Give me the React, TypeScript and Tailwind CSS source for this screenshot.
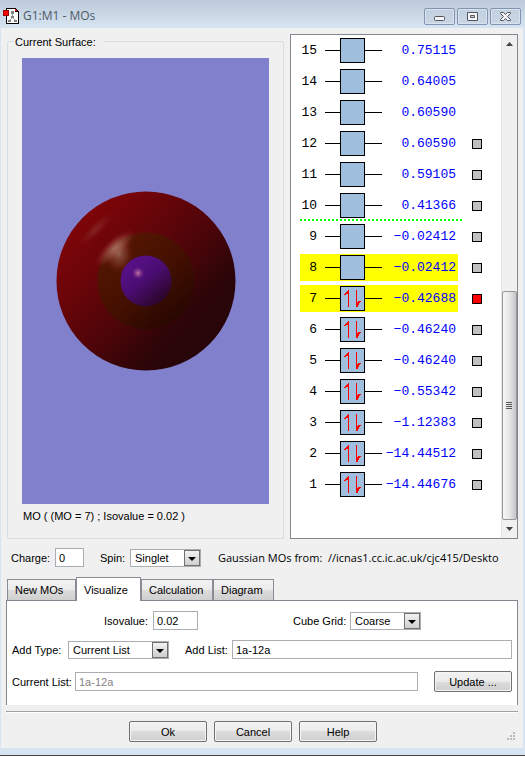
import React from "react"
import clsx from "clsx"

interface Orbital {
  id: number
  energy: string
  occupied?: boolean
  highlighted?: boolean
  surface?: "none" | "ready" | "active"
}

const ORBITALS: Orbital[] = [
  { id: 15, energy: "0.75115", surface: "none" },
  { id: 14, energy: "0.64005", surface: "none" },
  { id: 13, energy: "0.60590", surface: "none" },
  { id: 12, energy: "0.60590" },
  { id: 11, energy: "0.59105" },
  { id: 10, energy: "0.41366" },
  { id: 9, energy: "−0.02412" },
  { id: 8, energy: "−0.02412", highlighted: true },
  { id: 7, energy: "−0.42688", occupied: true, highlighted: true, surface: "active" },
  { id: 6, energy: "−0.46240", occupied: true },
  { id: 5, energy: "−0.46240", occupied: true },
  { id: 4, energy: "−0.55342", occupied: true },
  { id: 3, energy: "−1.12383", occupied: true },
  { id: 2, energy: "−14.44512", occupied: true },
  { id: 1, energy: "−14.44676", occupied: true },
]

const TABS = ["New MOs", "Visualize", "Calculation", "Diagram"]

const TitleBar = () => (
  <header className="flex h-7 items-center bg-linear-to-b from-[#bccad9] to-[#d7e4f2] pt-1 pr-1 pl-[3px]">
    <svg width="16" height="17" viewBox="0 0 16 17" shapeRendering="crispEdges">
      <path d="M3.5 .5h9l3 3v12h-12z" fill="#fff" stroke="#000" />
      <path d="M12 0h1v1h1v1h1v1h1v1h-4z" fill="#000" />
      <path d="M12 1h1v1h1v1h-2z" fill="#f00" />
      <path d="M9 5h1v5H9zM8 9h1v2H8zM10 9h1v2h-1zM7 11h1v1H7zM11 11h1v1h-1z" fill="#999" />
      <path d="M8 3h3v3H8zM8 8h3v2H8zM5 12h3v2H5zM11 12h3v2h-3z" fill="#808080" />
      <path d="M.5 2.5h5v5h-5z" fill="#f00" stroke="#900" />
    </svg>
    <h1 className="ml-1 flex-1 font-['Open_Sans',sans-serif] text-xs text-[#4c5966]">G1:M1 - MOs</h1>
    <div className="flex gap-[2px]">
      <CaptionButton label="Minimize">
        <rect x="1.5" y="5.5" width="10" height="4" rx="1" />
      </CaptionButton>
      <CaptionButton label="Maximize">
        <path d="M1.5 1.5h10v8h-10z M4.5 4.5h4v2h-4z" fillRule="evenodd" />
      </CaptionButton>
      <CaptionButton label="Close">
        <path d="M1.5 1.5h3l2 2 2-2h3v1l-3 3 3 3v1h-3l-2-2-2 2h-3v-1l3-3-3-3z" />
      </CaptionButton>
    </div>
  </header>
)

const CaptionButton = ({ label, children }: { label: string; children: React.ReactNode }) => (
  <button
    aria-label={label}
    className="flex h-[17px] w-[31px] items-center justify-center rounded-xs border border-[#8394b0] bg-linear-to-b from-[#c3d0df] to-[#c8d6e6] shadow-[inset_0_0_0_1px_#d9e3ee]"
  >
    <svg width="13" height="11" viewBox="0 0 13 11" fill="#f4f4f6" stroke="#53565f">
      {children}
    </svg>
  </button>
)

const Surface = () => (
  <svg width="180" height="180" viewBox="0 0 180 180" role="img" aria-label="Orbital surface">
    <defs>
      <linearGradient id="outer" x1="0.1" y1="0.15" x2="0.82" y2="0.82">
        <stop offset="0" stopColor="#800508" />
        <stop offset="0.3" stopColor="#680509" />
        <stop offset="0.6" stopColor="#4c0509" />
        <stop offset="0.85" stopColor="#2c0508" />
        <stop offset="1" stopColor="#280508" />
      </linearGradient>
      <linearGradient id="middle" x1="0.15" y1="0.1" x2="0.85" y2="0.9">
        <stop offset="0" stopColor="#561703" />
        <stop offset="0.5" stopColor="#451000" />
        <stop offset="1" stopColor="#270702" />
      </linearGradient>
      <linearGradient id="inner" x1="0.15" y1="0.1" x2="0.8" y2="0.9">
        <stop offset="0" stopColor="#59118b" />
        <stop offset="0.5" stopColor="#490d70" />
        <stop offset="1" stopColor="#2c0528" />
      </linearGradient>
      <radialGradient id="shine">
        <stop offset="0" stopColor="#b38974" stopOpacity="0.8" />
        <stop offset="0.5" stopColor="#a75a50" stopOpacity="0.45" />
        <stop offset="1" stopColor="#801515" stopOpacity="0" />
      </radialGradient>
      <radialGradient id="glint">
        <stop offset="0" stopColor="#c07a9c" />
        <stop offset="0.4" stopColor="#984898" stopOpacity="0.7" />
        <stop offset="1" stopColor="#59118b" stopOpacity="0" />
      </radialGradient>
    </defs>
    <circle cx="90" cy="90" r="89.5" fill="url(#outer)" />
    <ellipse cx="40" cy="38" rx="25" ry="7" fill="url(#shine)" opacity="0.3" transform="rotate(-44 40 38)" />
    <circle cx="90" cy="90" r="48.5" fill="url(#middle)" />
    <ellipse cx="59" cy="57" rx="27" ry="10" fill="url(#shine)" transform="rotate(-42 59 57)" />
    <ellipse cx="63" cy="63" rx="15" ry="20" fill="url(#shine)" opacity="0.75" />
    <circle cx="90" cy="90" r="25.5" fill="url(#inner)" />
    <circle cx="82" cy="82" r="7" fill="url(#glint)" />
  </svg>
)

const SpinPair = () => (
  <svg width="23" height="23" viewBox="0 0 23 23" fill="#f00" shapeRendering="crispEdges">
    <path d="M7 3h1v17H7zM7 3v4H5v1H3V7h1V6h1V5h1V4h1zM15 3h1v17h-1zM16 20v-5h1v-1h3v1h-1v1h-1v2h-1v2z" />
  </svg>
)

const OrbitalRow = ({ orbital }: { orbital: Orbital }) => {
  const { id, energy, occupied, highlighted, surface = "ready" } = orbital
  return (
    <li className="flex h-[31px] items-center">
      <div className={clsx("flex h-[27px] w-[158px] items-center", highlighted && "bg-[#ff0]")}>
        <span className="w-[17px] text-right">{id}</span>
        <span className="ml-2 h-px w-[15px] bg-black" />
        <span className="size-[25px] border border-black bg-[#a0bfdf]">{occupied && <SpinPair />}</span>
        <span className="h-px w-[17px] bg-black" />
        <span className="flex flex-1 justify-end pr-[2px] whitespace-nowrap text-[#00f]">{energy}</span>
      </div>
      {surface !== "none" && (
        <button
          aria-label={`Surface ${id}`}
          className={clsx(
            "ml-[14px] size-[10px] border border-black",
            surface === "active" ? "bg-[#f00]" : "bg-[#c0c0c0]"
          )}
        />
      )}
    </li>
  )
}

const ScrollBar = () => (
  <div className="flex w-4 flex-col border-l border-[#e6e6e6] bg-[#f0f0f0]">
    <button aria-label="Scroll up" className="flex h-[17px] items-center justify-center">
      <svg width="7" height="4" viewBox="0 0 7 4"><path d="M0 4L3.5 0 7 4z" fill="#444" /></svg>
    </button>
    <div className="flex flex-1 flex-col justify-end">
      <div className="flex h-[229px] items-center justify-center rounded-xs border border-[#979797] bg-linear-to-r from-[#f5f5f5] via-[#e6e6e6] to-[#c6c6c8]">
        <svg width="7" height="8" viewBox="0 0 7 8" shapeRendering="crispEdges">
          <path d="M0 0h6v1H0zM0 2h6v1H0zM0 4h6v1H0zM0 6h6v1H0z" fill="#555" />
        </svg>
      </div>
    </div>
    <button aria-label="Scroll down" className="flex h-[18px] items-center justify-center">
      <svg width="7" height="4" viewBox="0 0 7 4"><path d="M0 0h7L3.5 4z" fill="#444" /></svg>
    </button>
  </div>
)

interface SelectProps {
  id: string
  value: string
  className: string
}

const Select = ({ id, value, className }: SelectProps) => (
  <div className={clsx("relative h-[18px]", className)}>
    <select
      id={id}
      defaultValue={value}
      className="block h-full w-full appearance-none border border-[#abadb3] bg-white pl-1 leading-4 outline-none"
    >
      <option>{value}</option>
    </select>
    <span className="pointer-events-none absolute inset-y-px right-px flex w-4 items-center justify-center border border-[#707070] bg-linear-to-b from-[#f2f2f2] to-[#cfcfcf] pt-[2px]">
      <svg width="8" height="4" viewBox="0 0 8 4"><path d="M0 0h8L4 4z" /></svg>
    </span>
  </div>
)

const INPUT = "h-[19px] border border-[#abadb3] bg-white px-[3px] outline-none"

const PushButton = ({ children }: { children: React.ReactNode }) => (
  <button className="h-[21px] w-[78px] shrink-0 rounded-xs border border-[#707070] bg-[linear-gradient(#f2f2f2_0%,#ebebeb_50%,#dddddd_50%,#cfcfcf_100%)] shadow-[inset_0_0_0_1px_#f6f6f6]">
    {children}
  </button>
)

const App = () => {
  const [tab, setTab] = React.useState("Visualize")

  return (
    <div className="border-b border-[#444] bg-[#d7e4f2] pb-[7px] font-['Liberation_Sans',Arial,sans-serif] text-[11px] leading-4 whitespace-nowrap text-black">
      <TitleBar />
      <main className="mr-[2px] ml-px bg-[#f0f0f0] pr-[5px] pb-[6px] pl-[5px]">
        <div className="flex gap-[6px] pt-[6px] pl-px">
          <section className="mt-[7px] flex-1 rounded-xs border border-[#d5dfe5] px-[14px] pb-[13px]">
            <h2 className="-mt-2 mb-[8px] -ml-2 w-fit bg-[#f0f0f0] pr-2 pl-px">Current Surface:</h2>
            <div className="flex h-[446px] items-center justify-center bg-[#8080cc]">
              <Surface />
            </div>
            <p className="mt-1 pl-px">MO ( (MO = 7) ; Isovalue = 0.02 )</p>
          </section>

          <section className="flex h-[505px] w-[228px] border border-[#828790] bg-white">
            <ol className="flex-1 pl-[9px] font-['Liberation_Mono',monospace] text-[13px]">
              {ORBITALS.map((orbital) => (
                <React.Fragment key={orbital.id}>
                  <OrbitalRow orbital={orbital} />
                  {orbital.id === 10 && (
                    <li className="-mt-[2px] h-[2px] w-[162px] bg-[repeating-linear-gradient(90deg,#0f0_0px,#0f0_2px,transparent_2px,transparent_4px)]" />
                  )}
                </React.Fragment>
              ))}
            </ol>
            <ScrollBar />
          </section>
        </div>

        <div className="flex items-center pt-[9px] pl-[5px]">
          <label htmlFor="charge" className="w-11">Charge:</label>
          <input id="charge" defaultValue="0" className={clsx(INPUT, "w-[29px]")} />
          <label htmlFor="spin" className="ml-4 w-[30px]">Spin:</label>
          <Select id="spin" value="Singlet" className="w-[71px]" />
          <p className="ml-[17px] flex-1 font-['Open_Sans',sans-serif] whitespace-pre">
            Gaussian MOs from:  //icnas1.cc.ic.ac.uk/cjc415/Deskto
          </p>
        </div>

        <div role="tablist" className="mt-[10px] flex items-end pl-px">
          {TABS.map((name) => (
            <button
              key={name}
              role="tab"
              aria-selected={tab === name}
              onClick={() => setTab(name)}
              className={clsx(
                "border border-b-0 border-[#898c95] px-[7px] text-left",
                name === "New MOs" && "w-[69px]",
                name === "Visualize" && "w-[65px]",
                name === "Calculation" && "w-[72px]",
                name === "Diagram" && "w-[61px]",
                tab === name
                  ? "z-10 -mb-px h-6 bg-white"
                  : "h-[21px] bg-[linear-gradient(#f2f2f2_0%,#ebebeb_50%,#dddddd_50%,#cfcfcf_100%)]"
              )}
            >
              {name}
            </button>
          ))}
        </div>

        <div className="flex flex-col gap-3 border border-b-0 border-[#828790] bg-white pt-[10px] pr-[5px] pb-[13px] pl-[5px]">
          <div className="flex items-center">
            <label htmlFor="isovalue" className="ml-[92px] w-[49px]">Isovalue:</label>
            <input id="isovalue" defaultValue="0.02" className={clsx(INPUT, "w-[45px]")} />
            <label htmlFor="grid" className="ml-[95px] w-[57px]">Cube Grid:</label>
            <Select id="grid" value="Coarse" className="w-[71px]" />
          </div>
          <div className="-mt-[2px] flex items-center">
            <label htmlFor="type" className="w-14">Add Type:</label>
            <Select id="type" value="Current List" className="w-[101px]" />
            <label htmlFor="add" className="ml-4 w-[47px]">Add List:</label>
            <input id="add" defaultValue="1a-12a" className={clsx(INPUT, "min-w-0 flex-1")} />
          </div>
          <div className="flex items-center">
            <label htmlFor="current" className="w-[63px]">Current List:</label>
            <input id="current" readOnly value="1a-12a" className={clsx(INPUT, "mr-4 min-w-0 flex-1 text-[#838383]")} />
            <PushButton>Update ...</PushButton>
          </div>
        </div>

        <hr className="mt-[6px] border-t border-[#a0a0a0]" />
        <footer className="relative flex justify-center gap-[7px] border-t border-white pt-2 pr-[18px]">
          <PushButton>Ok</PushButton>
          <PushButton>Cancel</PushButton>
          <PushButton>Help</PushButton>
          <svg className="absolute right-[3px] bottom-[2px]" width="8" height="8" viewBox="0 0 8 8" fill="#bbb">
            <path d="M6 0h2v2H6zM6 3h2v2H6zM3 3h2v2H3zM6 6h2v2H6zM3 6h2v2H3zM0 6h2v2H0z" />
          </svg>
        </footer>
      </main>
    </div>
  )
}
export default App
